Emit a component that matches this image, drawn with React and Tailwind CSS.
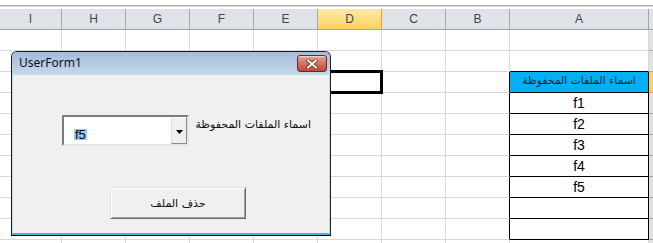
import React from "react";

// أعمدة الورقة (اتجاه من اليمين لليسار، لذلك I على اليسار)
const cols = [
    { k: "I", w: "w-[62px]" },
    { k: "H", w: "w-[64px]" },
    { k: "G", w: "w-[64px]" },
    { k: "F", w: "w-[64px]" },
    { k: "E", w: "w-[64px]" },
    { k: "D", w: "w-[64px]" },
    { k: "C", w: "w-[64px]" },
    { k: "B", w: "w-[64px]" },
    { k: "A", w: "w-[139px]" },
];

const rows = [1, 2, 3, 4, 5, 6, 7, 8, 9, 10, 11];
const aValues = { 4: "f1", 5: "f2", 6: "f3", 7: "f4", 8: "f5" };

const arabic = { fontFamily: '"DejaVu Sans", "Noto Sans", sans-serif' };

function Cell({ col, row }) {
    const inBlock = row >= 3 && row <= 10;
    let cls = "h-full shrink-0 border-r border-b border-[#d9d9d9]";
    if (col.k === "B" && inBlock) {
        cls = "h-full shrink-0 border-r border-b border-[#d9d9d9] border-r-black";
    }
    if (col.k === "A" && row === 2) {
        cls = "h-full shrink-0 border-r border-b border-[#d9d9d9] border-b-black";
    }
    if (col.k === "A" && inBlock) {
        cls = "h-full shrink-0 border-r border-b border-black flex items-center justify-center";
    }
    if (col.k === "A" && row === 3) {
        cls = "h-full shrink-0 border-r border-b border-black bg-[#00b0f0] flex items-center justify-center";
    }
    if (col.k === "D" && row === 3) {
        cls = "h-full shrink-0 border-r border-b border-[#d9d9d9] relative";
    }

    return (
        <div className={`${cls} ${col.w}`}>
            {col.k === "A" && row === 3 && (
                <span dir="rtl" className="text-[10.8px] text-[#0b2a3a] leading-none pb-[1px]" style={arabic}>
                    اسماء الملفات المحفوظة
                </span>
            )}
            {col.k === "A" && aValues[row] && (
                <span className="text-[14px] text-black leading-none" style={{ fontFamily: '"Liberation Sans", sans-serif' }}>
                    {aValues[row]}
                </span>
            )}
            {col.k === "D" && row === 3 && (
                <div className="absolute -top-[2px] -left-[2px] -right-[2px] -bottom-[2px] border-[3px] border-black" />
            )}
        </div>
    );
}

function Sheet() {
    return (
        <div className="w-[653px] h-[243px] overflow-hidden bg-white" style={{ fontFamily: '"Liberation Sans", sans-serif' }}>
            {/* شريط علوي */}
            <div className="h-[9px] flex flex-col">
                <div className="h-[5px]" />
                <div className="h-[1px] bg-[#a9a9a9]" />
                <div className="h-[1px] bg-[#dedede]" />
            </div>

            {/* رؤوس الأعمدة */}
            <div className="flex h-[21px] bg-[#dfe3e8] border-b border-[#9ea4ab]">
                {cols.map((c) =>
                    c.k === "D" ? (
                        <div
                            key={c.k}
                            className={`${c.w} shrink-0 h-full border-r border-[#e2a33c] bg-gradient-to-b from-[#fdeaa6] to-[#f8d35c] flex items-center justify-center text-[12px] text-[#3a4656]`}
                        >
                            {c.k}
                        </div>
                    ) : (
                        <div
                            key={c.k}
                            className={`${c.w} shrink-0 h-full border-r border-[#a2a8b0] flex items-center justify-center text-[12px] text-[#3a4656]`}
                        >
                            {c.k}
                        </div>
                    )
                )}
                <div className="flex-1" />
            </div>

            {/* الصفوف */}
            {rows.map((r) => (
                <div key={r} className="flex h-[21px]">
                    {cols.map((c) => (
                        <Cell key={c.k} col={c} row={r} />
                    ))}
                    {r === 3 ? (
                        <div className="flex-1 h-full bg-[#f7d15f] border-b border-[#e2a33c]" />
                    ) : (
                        <div className="flex-1 h-full bg-[#dfe3e8] border-b border-[#a2a8b0]" />
                    )}
                </div>
            ))}
        </div>
    );
}

function CloseButton() {
    return (
        <div className="w-[30px] h-[17px] rounded-[3px] border border-[#6e2a22] bg-gradient-to-b from-[#e6a597] via-[#d27362] to-[#c0453a] flex items-center justify-center shadow-[inset_0_1px_0_rgba(255,255,255,0.5)]">
            <svg width="12" height="10" viewBox="0 0 12 10">
                <path d="M2 1.5 L10 8.5 M10 1.5 L2 8.5" stroke="#5b1d17" strokeWidth="3.4" strokeLinecap="square" />
                <path d="M2 1.5 L10 8.5 M10 1.5 L2 8.5" stroke="#ffffff" strokeWidth="2" strokeLinecap="square" />
            </svg>
        </div>
    );
}

function UserForm() {
    return (
        <div className="absolute left-[11px] top-[51px] w-[320px] h-[185px] z-10 flex flex-col rounded-t-[6px] border border-[#1c1c1c] border-b-[#000] overflow-hidden">
            {/* شريط العنوان */}
            <div className="h-[23px] shrink-0 bg-gradient-to-b from-[#a2bddc] to-[#c7d8eb] flex items-start justify-between pl-[7px] pr-[3px] pt-[3px]">
                <span className="text-[12px] leading-[16px] text-[#111]" style={{ fontFamily: '"Noto Sans", sans-serif' }}>
                    UserForm1
                </span>
                <CloseButton />
            </div>

            {/* جسم النموذج */}
            <div className="flex-1 bg-[#f0f0f0] border-x border-[#c4dcf0] border-b-2 border-b-[#44b4e4] pt-[40px] pl-[49px]">
                <div className="flex items-start">
                    {/* القائمة المنسدلة */}
                    <div className="w-[127px] h-[31px] flex border-2 border-t-[#7b7b7b] border-l-[#7b7b7b] border-r-[#e6e6e6] border-b-[#e6e6e6] bg-white">
                        <div className="flex-1 pl-[10px] pt-[4px]">
                            <span className="bg-[#99c9ef] text-[13px] leading-[11px] inline-block text-black px-[1px]" style={{ fontFamily: '"Liberation Sans", sans-serif' }}>
                                f5
                            </span>
                        </div>
                        <div className="w-[16px] h-full bg-[#f0f0f0] border border-t-white border-l-[#dcdcdc] border-r-[#8a8a8a] border-b-[#8a8a8a] flex items-center justify-center">
                            <svg width="7" height="4" viewBox="0 0 7 4" className="mt-[3px]">
                                <path d="M0 0 H7 L3.5 4 Z" fill="#000" />
                            </svg>
                        </div>
                    </div>
                    {/* التسمية */}
                    <div dir="rtl" className="w-[111px] ml-[11px] mt-[3px] text-[11px] leading-[14px] text-[#111] text-right whitespace-nowrap" style={arabic}>
                        اسماء الملفات المحفوظة
                    </div>
                </div>

                {/* زر الحذف */}
                <div className="mt-[41px] ml-[48px] w-[136px] h-[32px] bg-[#f0f0f0] border border-t-[#e3e3e3] border-l-[#e3e3e3] border-r-[#6d6d6d] border-b-[#6d6d6d] shadow-[inset_1px_1px_0_#ffffff,inset_-1px_-1px_0_#a0a0a0] flex items-center justify-center">
                    <span dir="rtl" className="text-[11px] leading-none text-[#111]" style={arabic}>
                        حذف الملف
                    </span>
                </div>
            </div>
        </div>
    );
}

export default function App() {
    return (
        <div className="relative w-[653px] h-[243px] overflow-hidden">
            <Sheet />
            <UserForm />
        </div>
    );
}
